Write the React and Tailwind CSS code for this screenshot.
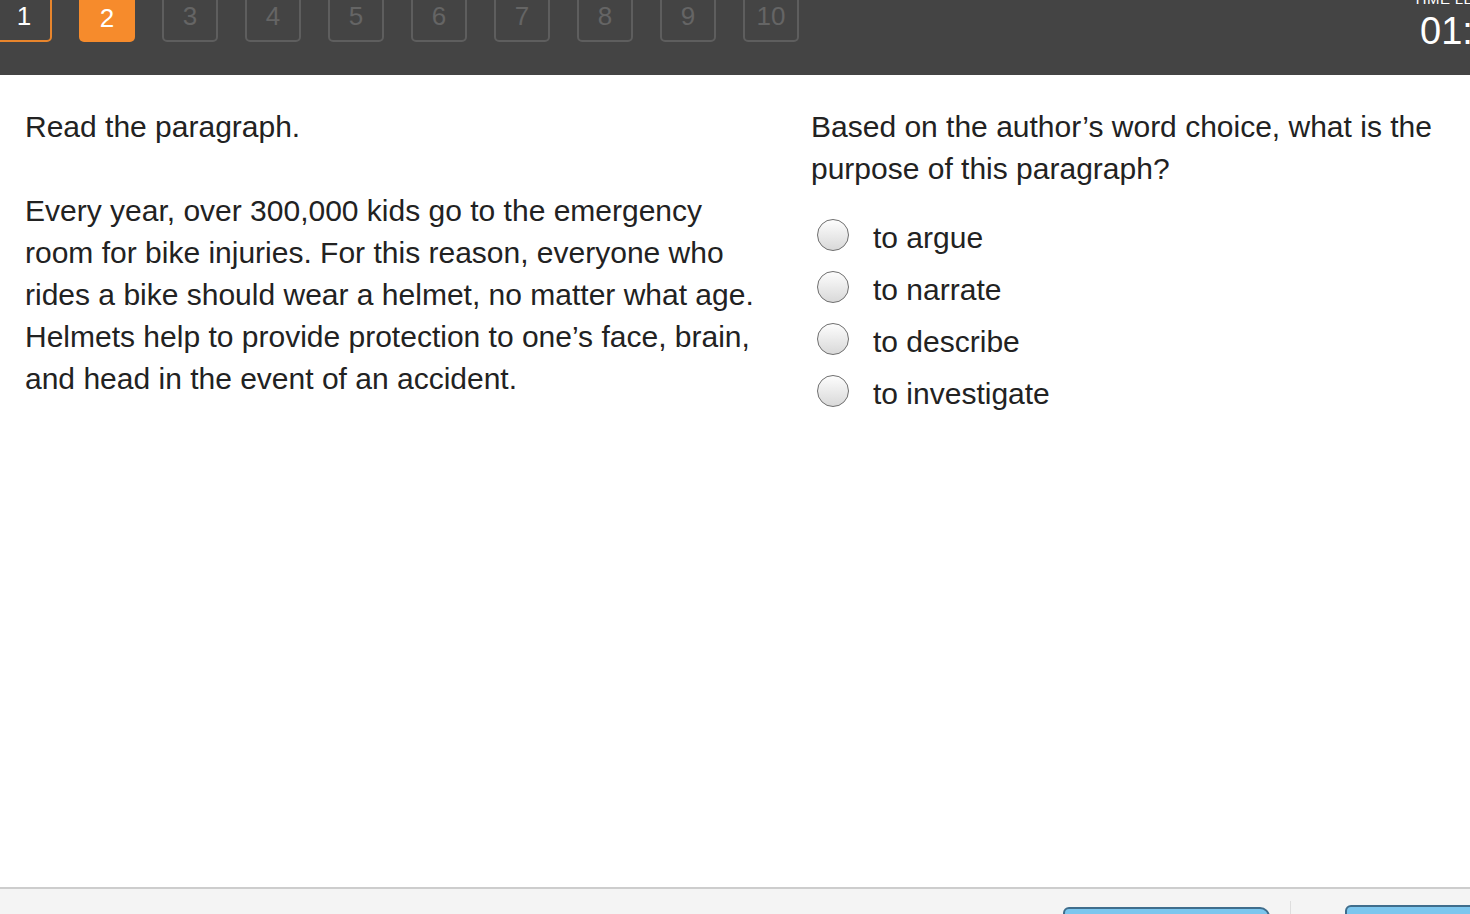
import React from "react";

const nums = [1, 2, 3, 4, 5, 6, 7, 8, 9, 10];
const options = ["to argue", "to narrate", "to describe", "to investigate"];

function NavBox({ n }) {
  if (n === 1)
    return (
      <div className="w-[56px] h-[56px] shrink-0 rounded-[5px] border-2 border-[#e8852c] flex items-end justify-center pb-[11px] text-[26px] leading-none text-white">
        {n}
      </div>
    );
  if (n === 2)
    return (
      <div className="w-[56px] h-[56px] shrink-0 rounded-[5px] bg-[#f68b2c] flex items-end justify-center pb-[11px] text-[26px] leading-none text-white">
        {n}
      </div>
    );
  return (
    <div className="w-[56px] h-[56px] shrink-0 rounded-[5px] border-2 border-[#5e5e5e] flex items-end justify-center pb-[11px] text-[26px] leading-none text-[#656565]">
      {n}
    </div>
  );
}

export default function App() {
  return (
    <div
      className="w-[1470px] h-[914px] overflow-hidden flex flex-col bg-white text-[#222]"
      style={{ fontFamily: '"Liberation Sans", Arial, sans-serif' }}
    >
      <header className="h-[75px] shrink-0 bg-[#444444] flex overflow-hidden">
        <div className="flex gap-[27px] -mt-[14px] -ml-[4px] h-[56px]">
          {nums.map((n) => (
            <NavBox key={n} n={n} />
          ))}
        </div>
        <div className="flex-1" />
        <div className="w-[50px] shrink-0 flex flex-col -mt-[9px] whitespace-nowrap text-white">
          <div className="text-[15px] leading-none uppercase tracking-wide -ml-[7px]">Time left</div>
          <div className="text-[38px] leading-none mt-[6px]">01:24</div>
        </div>
      </header>

      <main className="flex-1 flex">
        <div className="w-[811px] shrink-0 pl-[25px] pr-[20px] pt-[31px] text-[30px] leading-[42px]">
          <p>Read the paragraph.</p>
          <p className="mt-[42px]">
            Every year, over 300,000 kids go to the emergency
            <br />
            room for bike injuries. For this reason, everyone who
            <br />
            rides a bike should wear a helmet, no matter what age.
            <br />
            Helmets help to provide protection to one’s face, brain,
            <br />
            and head in the event of an accident.
          </p>
        </div>
        <div className="flex-1 pt-[31px] pr-[20px] text-[30px] leading-[42px]">
          <p>
            Based on the author’s word choice, what is the
            <br />
            purpose of this paragraph?
          </p>
          <ul className="mt-[29px] flex flex-col gap-[20px]">
            {options.map((o) => (
              <li key={o} className="flex items-center h-[32px]">
                <span className="ml-[6px] w-[32px] h-[32px] rounded-full border-[1.5px] border-[#6f6f6f] bg-gradient-to-b from-[#fdfdfd] to-[#d9d9d9] shrink-0" />
                <span className="ml-[24px] relative top-[3px]">{o}</span>
              </li>
            ))}
          </ul>
        </div>
      </main>

      <footer className="h-[27px] shrink-0 border-t-2 border-[#cdcdcd] bg-[#f4f4f4] flex items-start">
        <div className="flex-1" />
        <div className="mt-[18px] w-[207px] h-[30px] rounded-tl-[6px] rounded-tr-[10px] border-2 border-[#3f6d8c] bg-[#7cc6ee]" />
        <div className="ml-[20px] mt-[12px] w-px h-[20px] bg-[#dedede]" />
        <div className="ml-[54px] mt-[16px] w-[140px] h-[30px] rounded-tl-[6px] border-2 border-[#3f6d8c] bg-[#7cc6ee] -mr-[15px]" />
      </footer>
    </div>
  );
}
